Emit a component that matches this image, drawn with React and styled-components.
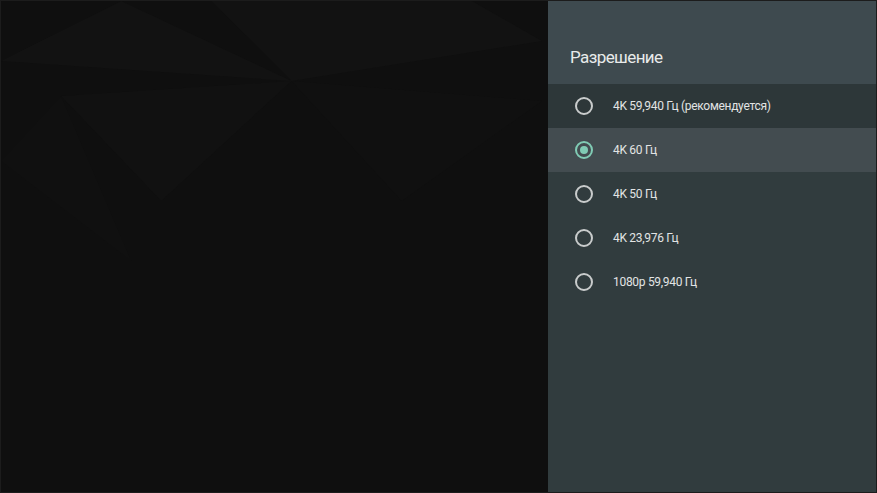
import React from "react";
import styled, { createGlobalStyle } from "styled-components";

const options = [
  { label: "4K 59,940 Гц (рекомендуется)" },
  { label: "4K 60 Гц", selected: true },
  { label: "4K 50 Гц" },
  { label: "4K 23,976 Гц" },
  { label: "1080p 59,940 Гц" },
];

export default function App() {
  return (
    <>
      <GlobalStyle />
      <Screen>
        <Backdrop>
          <svg width="100%" height="100%" viewBox="0 0 546 491" preserveAspectRatio="none">
            <polygon points="0,60 290,80 120,0" fill="#121212" />
            <polygon points="60,95 290,80 160,200" fill="#111111" />
            <polygon points="290,80 540,40 470,0 210,0" fill="#121212" />
            <polygon points="290,80 400,200 540,100" fill="#101010" />
            <polygon points="0,160 60,95 130,260" fill="#101010" />
          </svg>
        </Backdrop>
        <Panel>
          <Header>
            <Title>Разрешение</Title>
          </Header>
          <List>
            {options.map((o, i) => (
              <Row key={o.label} $first={i === 0} $focused={o.selected}>
                <Radio $checked={o.selected} />
                <Label>{o.label}</Label>
              </Row>
            ))}
          </List>
        </Panel>
      </Screen>
    </>
  );
}

const GlobalStyle = createGlobalStyle`
  body {
    margin: 0;
    background: #0c0c0c;
    font-family: Roboto, "Noto Sans", sans-serif;
  }
`;

const Screen = styled.div`
  width: 877px;
  height: 493px;
  box-sizing: border-box;
  border: 1px solid #1c1c1c;
  display: flex;
  background: #0f0f0f;
  overflow: hidden;
`;

const Backdrop = styled.div`
  flex: 1;
  display: flex;
`;

const Panel = styled.div`
  width: 328px;
  display: flex;
  flex-direction: column;
  background: #313c3e;
`;

const Header = styled.div`
  height: 83px;
  background: #3e4a4f;
  display: flex;
  align-items: flex-end;
  padding: 0 0 17px 22px;
  box-sizing: border-box;
`;

const Title = styled.div`
  font-size: 17px;
  color: #e8eaea;
  letter-spacing: -0.6px;
`;

const List = styled.div`
  display: flex;
  flex-direction: column;
`;

const Row = styled.div`
  height: 44px;
  display: flex;
  align-items: center;
  padding-left: 27px;
  padding-bottom: 1px;
  box-sizing: border-box;
  background: ${(p) => (p.$focused ? "#434c50" : p.$first ? "#2d3739" : "transparent")};
`;

const Radio = styled.div`
  width: 14px;
  height: 14px;
  border-radius: 50%;
  border: 2px solid ${(p) => (p.$checked ? "#80cbb4" : "#c9cccc")};
  display: flex;
  align-items: center;
  justify-content: center;
  &::after {
    content: "";
    display: ${(p) => (p.$checked ? "block" : "none")};
    width: 8px;
    height: 8px;
    border-radius: 50%;
    background: #80cbb4;
  }
`;

const Label = styled.div`
  margin-left: 20px;
  font-size: 12px;
  color: #e2e4e4;
  letter-spacing: -0.3px;
`;
